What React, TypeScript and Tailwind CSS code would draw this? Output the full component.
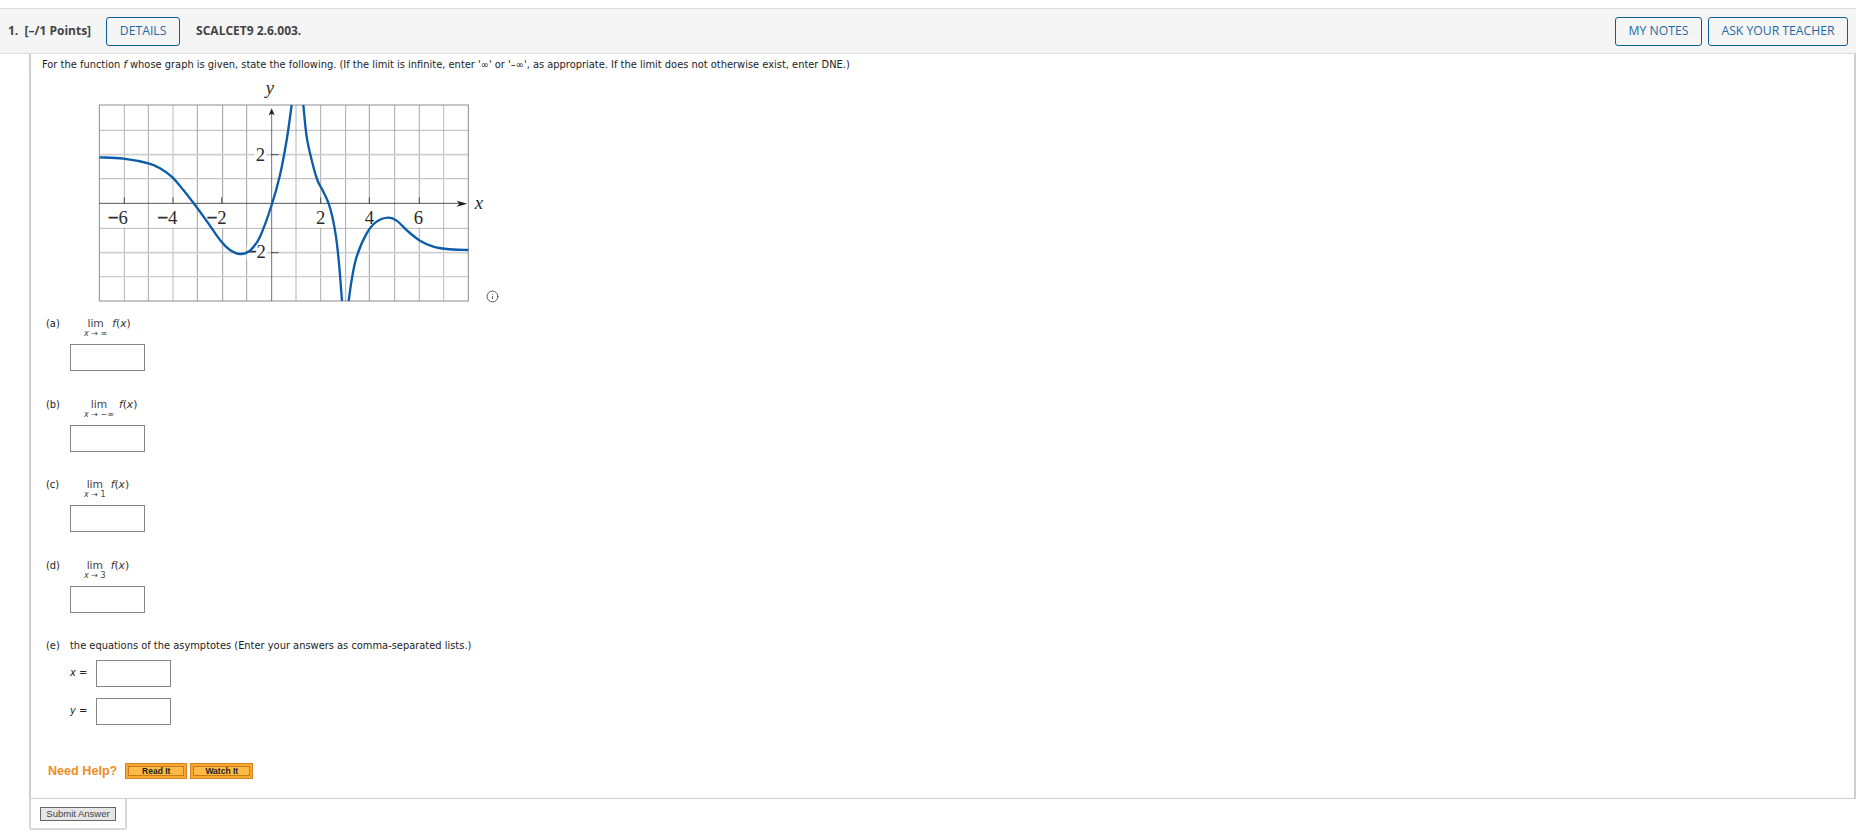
import { Info } from 'lucide-react';

// Points traced off the textbook graph, in the 3x coordinates of the 1320x720 viewBox
const leftBranch: [number, number][] = [
	[58, 232], [130, 236], [205, 250], [240, 265], [275, 290], [310, 330], [345, 375], [385, 430],
	[420, 480], [450, 510], [480, 522], [510, 512], [540, 470], [575, 375], [600, 285], [620, 180], [635, 75],
];
const middleBranch: [number, number][] = [
	[670, 75], [680, 170], [695, 240], [712, 300], [730, 335], [745, 368], [757, 410], [768, 470], [777, 550], [786, 663],
];
const rightBranch: [number, number][] = [
	[806, 663], [815, 600], [830, 530], [860, 460], [890, 425], [925, 413], [950, 422], [985, 455],
	[1020, 482], [1060, 500], [1100, 507], [1165, 510],
];

// Catmull-Rom through the points, written out as cubic segments
function smooth(pts: [number, number][]) {
	let d = `M${pts[0][0]} ${pts[0][1]}`;
	for (let i = 0; i < pts.length - 1; i++) {
		const p0 = pts[i - 1] ?? pts[i];
		const p1 = pts[i];
		const p2 = pts[i + 1];
		const p3 = pts[i + 2] ?? p2;
		const c1x = p1[0] + (p2[0] - p0[0]) / 6;
		const c1y = p1[1] + (p2[1] - p0[1]) / 6;
		const c2x = p2[0] - (p3[0] - p1[0]) / 6;
		const c2y = p2[1] - (p3[1] - p1[1]) / 6;
		d += ` C${c1x} ${c1y} ${c2x} ${c2y} ${p2[0]} ${p2[1]}`;
	}
	return d;
}

// Grid lines do not share one weight in the scan
const gridV: [number, string, number][] = [
	[133, '#b4b4b4', 3], [205, '#aaaaaa', 3], [279, '#bcbcbc', 3], [352, '#8f8f8f', 2.5], [428, '#888888', 2.5],
	[500, '#8a8a8a', 2.5], [648, '#d2d2d2', 5], [722, '#9a9a9a', 2.5], [797, '#9a9a9a', 2.5], [868, '#8a8a8a', 2.5],
	[944, '#9a9a9a', 2.5], [1018, '#bdbdbd', 4], [1091, '#bcbcbc', 3],
];
const gridH: [number, string, number][] = [
	[151, '#a8a8a8', 2.5], [224, '#cfcfcf', 5], [296, '#c4c4c4', 4], [445, '#a8a8a8', 2.5], [518, '#cfcfcf', 5], [590, '#cccccc', 4],
];

function Minus() {
	return (
		<tspan stroke="#2b2b2b" strokeWidth={2}>
			−
		</tspan>
	);
}

function Graph() {
	const serif = { fontFamily: '"Liberation Serif", serif' };
	return (
		<svg viewBox="0 -15 1320 735" className="block w-[440px] h-[245px]">
			{gridV.map(([x, c, w]) => (
				<line key={x} x1={x} y1={75} x2={x} y2={663} stroke={c} strokeWidth={w} />
			))}
			{gridH.map(([y, c, w]) => (
				<line key={y} x1={58} y1={y} x2={1165} y2={y} stroke={c} strokeWidth={w} />
			))}
			<rect x={58} y={75} width={1107} height={588} fill="none" stroke="#8c8c8c" strokeWidth={3} />

			{/* label backgrounds break the grid lines */}
			<g fill="#fff">
				<rect x={78} y={372} width={76} height={71} />
				<rect x={226} y={372} width={76} height={71} />
				<rect x={400} y={372} width={46} height={71} />
				<rect x={706} y={372} width={32} height={71} />
				<rect x={852} y={372} width={32} height={71} />
				<rect x={999} y={372} width={32} height={71} />
				<rect x={524} y={205} width={34} height={42} />
				<rect x={500} y={498} width={60} height={42} />
			</g>

			{/* axes and ticks */}
			<line x1={58} y1={370} x2={1150} y2={370} stroke="#333" strokeWidth={2.5} />
			<line x1={575} y1={95} x2={575} y2={663} stroke="#555" strokeWidth={2.5} />
			<path d="M1130 362 L1162 371 L1130 380 L1138 371 Z" fill="#222" />
			<path d="M575 85 L566 106 L575 101 L584 106 Z" fill="#222" />
			{[133, 279, 425, 722, 868, 1018].map((x) => (
				<line key={x} x1={x} y1={352} x2={x} y2={370} stroke="#333" strokeWidth={2.5} />
			))}
			<line x1={573} y1={224} x2={596} y2={224} stroke="#333" strokeWidth={2.5} />
			<line x1={573} y1={518} x2={596} y2={518} stroke="#333" strokeWidth={2.5} />

			{/* number labels */}
			<g style={serif} fontSize={56} fill="#2b2b2b">
				<text x={541} y={243} textAnchor="middle">2</text>
				<text x={722} y={431} textAnchor="middle">2</text>
				<text x={868} y={431} textAnchor="middle">4</text>
				<text x={1015} y={431} textAnchor="middle">6</text>
				<text x={114} y={431} textAnchor="middle"><Minus />6</text>
				<text x={262} y={431} textAnchor="middle"><Minus />4</text>
				<text x={410} y={431} textAnchor="middle"><Minus />2</text>
				<text x={528} y={534} textAnchor="middle"><Minus />2</text>
				<text x={570} y={42} textAnchor="middle" fontStyle="italic">y</text>
				<text x={1197} y={387} textAnchor="middle" fontStyle="italic">x</text>
			</g>

			{/* the function */}
			<g fill="none" stroke="#0b5cab" strokeWidth={7}>
				<path d={smooth(leftBranch)} />
				<path d={smooth(middleBranch)} />
				<path d={smooth(rightBranch)} />
			</g>
		</svg>
	);
}

function Lim({ under }: { under: string }) {
	return (
		<div className="inline-flex items-start ml-[14px]">
			<div className="flex flex-col items-center text-[#444]">
				<span className="text-[10.7px] leading-[13px]">lim</span>
				<span className="-mt-[1px] text-[8px] leading-[9px] whitespace-nowrap">
					<i>x</i> → {under}
				</span>
			</div>
			<span className="ml-[5px] text-[10.7px] leading-[13px] whitespace-nowrap text-[#333]">
				<i>f</i>(<i>x</i>)
			</span>
		</div>
	);
}

function Answer() {
	return <div className="w-[75px] h-[27px] border border-[#858585] bg-white" />;
}

function LimitPart({ label, under, mt }: { label: string; under: string; mt: string }) {
	return (
		<div className={mt}>
			<div className="flex items-start h-[26px]">
				<span className="w-[24px] leading-[13px]">{label}</span>
				<Lim under={under} />
			</div>
			<div className="ml-[24px] mt-[1px]">
				<Answer />
			</div>
		</div>
	);
}

function HelpButton({ text, width }: { text: string; width: string }) {
	return (
		<div className={`${width} h-[16px] border border-[#d9821f] bg-[#f7a833] p-[2px]`}>
			<div className="h-full border border-[#c97a18] bg-[#fdbb45] flex items-center justify-center font-['Liberation_Sans',sans-serif] text-[8.5px] font-bold text-[#222]">
				{text}
			</div>
		</div>
	);
}

const outlineBtn =
	'h-[29px] rounded-[3px] border border-[#0a5f95] flex items-center justify-center text-[#1d6aa5] text-[12.2px] bg-[#f5f5f5]';

export default function App() {
	return (
		<div className="min-h-[838px] bg-white pt-[8px] font-['DejaVu_Sans',sans-serif] text-[9.9px] text-[#222]">
			{/* Question header */}
			<div className="h-[46px] border-y border-[#dcdcdc] bg-[#f5f5f5] flex items-center pl-[8px] pr-[8px] font-['Open_Sans',sans-serif]">
				<span className="text-[12px] font-bold text-[#444] whitespace-pre">1.  [–/1 Points]</span>
				<div className={`${outlineBtn} w-[74px] ml-[15px]`}>DETAILS</div>
				<span className="ml-[16px] text-[12px] font-bold text-[#444]">SCALCET9 2.6.003.</span>
				<div className={`${outlineBtn} w-[87px] ml-auto`}>MY NOTES</div>
				<div className={`${outlineBtn} w-[140px] ml-[6px]`}>ASK YOUR TEACHER</div>
			</div>

			{/* Question body */}
			<div className="ml-[29px] border-l-2 border-r-2 border-[#cfcfcf] border-b h-[745px] pl-[15px] pt-[4px]">
				<p className="-ml-[4px] leading-[13px]">
					For the function <i>f</i> whose graph is given, state the following. (If the limit is infinite, enter
					'∞' or '–∞', as appropriate. If the limit does not otherwise exist, enter DNE.)
				</p>

				<div className="relative ml-[34px] mt-[4px] w-[440px] h-[245px]">
					<Graph />
					<Info className="absolute left-[406px] top-[215px] w-[13px] h-[13px] text-[#333]" strokeWidth={1.5} />
				</div>

				<LimitPart label="(a)" under="∞" mt="mt-[-3px]" />
				<LimitPart label="(b)" under="−∞" mt="mt-[27px]" />
				<LimitPart label="(c)" under="1" mt="mt-[26px]" />
				<LimitPart label="(d)" under="3" mt="mt-[27px]" />

				<div className="mt-[26px] flex items-start leading-[13px]">
					<span className="w-[24px]">(e)</span>
					<span>the equations of the asymptotes (Enter your answers as comma-separated lists.)</span>
				</div>
				<div className="ml-[24px] mt-[8px] flex items-center">
					<span className="w-[26px]">
						<i>x</i> =
					</span>
					<Answer />
				</div>
				<div className="ml-[24px] mt-[11px] flex items-center">
					<span className="w-[26px]">
						<i>y</i> =
					</span>
					<Answer />
				</div>

				<div className="mt-[38px] flex items-center ml-[2px]">
					<span className="font-['Liberation_Sans',sans-serif] text-[12.6px] font-bold text-[#f28c1e] leading-[16px]">
						Need Help?
					</span>
					<div className="ml-[8px] flex gap-[3px]">
						<HelpButton text="Read It" width="w-[62px]" />
						<HelpButton text="Watch It" width="w-[63px]" />
					</div>
				</div>
			</div>

			{/* Submit tab */}
			<div className="ml-[29px] w-[98px] h-[31px] border-x-2 border-b-2 border-[#d8d8d8] rounded-b-[3px] pl-[9px] pt-[8px]">
				<div className="w-[76px] h-[14px] border border-[#666] bg-[#e6e6e6] flex items-center justify-center font-['Liberation_Sans',sans-serif] text-[9.5px] text-[#444]">
					Submit Answer
				</div>
			</div>
		</div>
	);
}
